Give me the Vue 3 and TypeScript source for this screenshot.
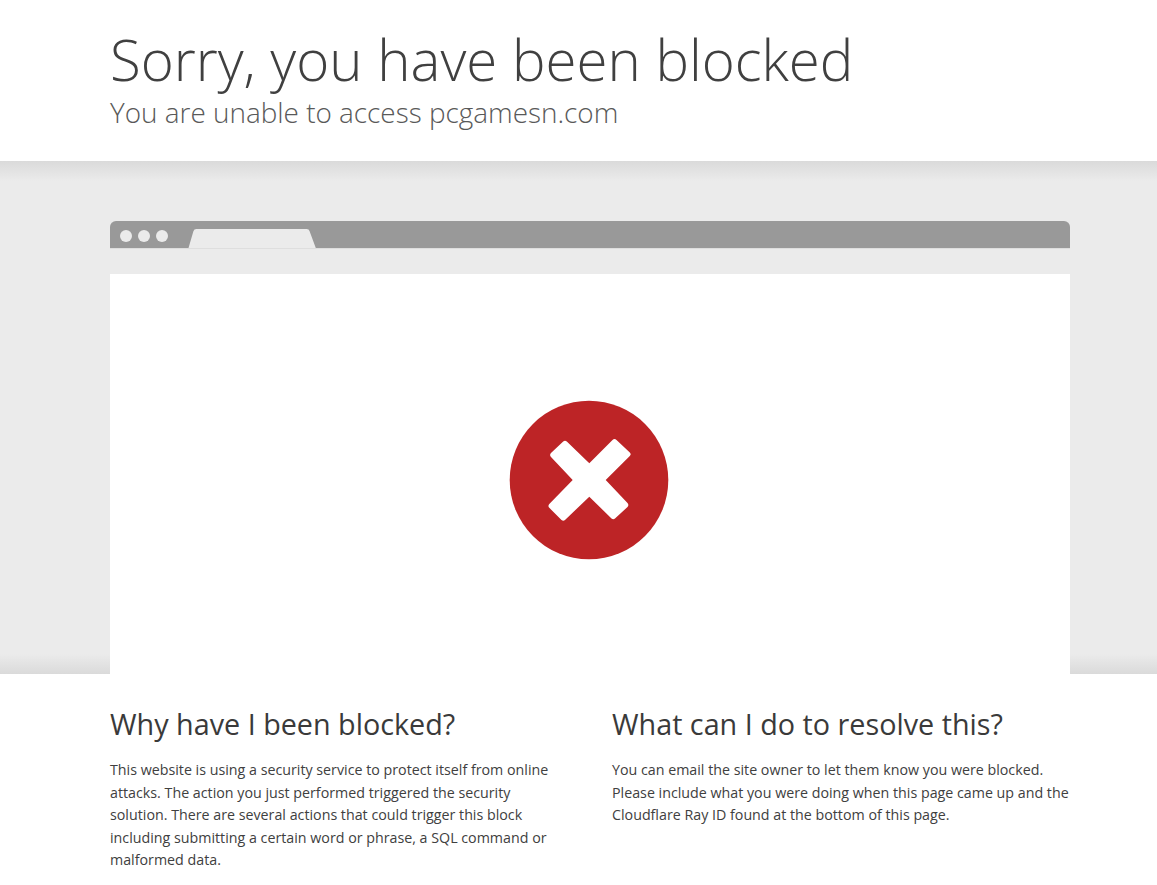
<template>
  <div class="page">
    <header class="top">
      <div class="wrap">
        <h1 class="title">Sorry, you have been blocked</h1>
        <h2 class="subtitle">You are unable to access pcgamesn.com</h2>
      </div>
    </header>

    <section class="stage">
      <div class="wrap">
        <div class="browser-bar">
          <div class="dots">
            <span class="dot"></span>
            <span class="dot"></span>
            <span class="dot"></span>
          </div>
          <svg class="tab" width="128" height="20" viewBox="0 0 128 20">
            <path d="M0.5 20 L5.4 3.2 Q6 1 8.4 1 L118.6 1 Q121 1 121.6 3.2 L127.8 20 Z" fill="#ebebeb" />
          </svg>
        </div>
        <div class="viewport">
          <svg class="blocked-icon" width="160" height="160" viewBox="0 0 160 160">
            <circle cx="80" cy="80" r="79.3" fill="#bd2426" />
            <path
              fill="#fff"
              d="M80.3 63.3 L103.5 40 Q105.5 38.2 107.5 40 L120.8 52.5 Q122.6 54.3 120.8 56 L96.7 80 L118.5 103 Q120.2 105 118.5 107 L106 118.5 Q104.3 120 102.5 118.5 L80.3 96.7 L56 120 Q54.3 121.6 52.5 120 L40.3 107.8 Q38.6 106 40.3 104 L63.7 80 L42 57 Q40.2 55 42 53 L54.2 41.5 Q56 40 57.8 41.5 Z"
            />
          </svg>
        </div>
      </div>
    </section>

    <section class="info">
      <div class="wrap columns">
        <div class="col">
          <h2 class="col-title">Why have I been blocked?</h2>
          <p class="col-text">
            This website is using a security service to protect itself from online attacks. The action you just
            performed triggered the security solution. There are several actions that could trigger this block
            including submitting a certain word or phrase, a SQL command or malformed data.
          </p>
        </div>
        <div class="col">
          <h2 class="col-title">What can I do to resolve this?</h2>
          <p class="col-text">
            You can email the site owner to let them know you were blocked. Please include what you were doing
            when this page came up and the Cloudflare Ray ID found at the bottom of this page.
          </p>
        </div>
      </div>
    </section>
  </div>
</template>

<script setup lang="ts">
</script>

<style>
html,
body {
  margin: 0;
  background: #fff;
}
</style>

<style scoped>
.page {
  font-family: "Open Sans", "Liberation Sans", sans-serif;
  color: #404040;
}

.wrap {
  width: 960px;
  margin-left: 110px;
}

.top {
  height: 161px;
  box-sizing: border-box;
  padding-top: 24px;
  background: #fff;
}

.title {
  margin: 0;
  font-size: 56.4px;
  font-weight: 300;
  line-height: 72px;
  color: #404040;
}

.subtitle {
  margin: 0;
  font-size: 27.9px;
  font-weight: 300;
  line-height: 32px;
  color: #595959;
}

.stage {
  height: 513px;
  box-sizing: border-box;
  padding-top: 60px;
  background: linear-gradient(#dadada 0, #ebebeb 20px, #ebebeb 493px, #dadada 100%);
}

.browser-bar {
  display: flex;
  align-items: flex-end;
  height: 27px;
  background: #999;
  border-radius: 6px 6px 0 0;
  box-shadow: 0 1px 0 #dedede;
}

.dots {
  display: flex;
  gap: 6px;
  align-self: flex-start;
  padding: 9px 0 0 10px;
  width: 68px;
  box-sizing: border-box;
}

.dot {
  width: 12px;
  height: 12px;
  border-radius: 50%;
  background: #ebebeb;
}

.tab {
  display: block;
  margin-left: 10px;
}

.viewport {
  display: flex;
  align-items: center;
  justify-content: center;
  height: 400px;
  margin-top: 26px;
  background: #fff;
}

.blocked-icon {
  display: block;
  margin-top: 11px;
  margin-left: -2px;
}

.info {
  padding: 30px 0 20px;
  background: #fff;
}

.columns {
  display: grid;
  grid-template-columns: 460px 458px;
  column-gap: 42px;
}

.col-title {
  margin: 0 0 15px;
  font-size: 28.75px;
  font-weight: 400;
  line-height: 40px;
  color: #3a3a3a;
}

.col-text {
  margin: 0;
  font-size: 14.25px;
  line-height: 22.5px;
  color: #404040;
}
</style>
